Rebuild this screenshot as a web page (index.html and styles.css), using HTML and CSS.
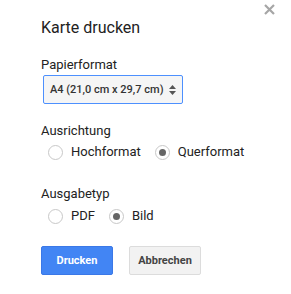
FILE: index.html
```html
<!DOCTYPE html>
<html lang="de">
<head>
    <meta charset="UTF-8">
    <title>Karte drucken</title>
    <link rel="stylesheet" href="styles.css">
</head>
<body>
    <div class="print-dialog">
        <svg class="close" width="11" height="11" viewBox="0 0 11 11">
            <path d="M1 1 L10 10 M10 1 L1 10" stroke="#a6a6a6" stroke-width="2.2"/>
        </svg>
        <div class="title">Karte drucken</div>

        <div class="section">
            <div class="label">Papierformat</div>
            <div class="select">
                <span>A4 (21,0 cm x 29,7 cm)</span>
                <svg class="arrows" width="7" height="10" viewBox="0 0 7 10">
                    <path d="M0 4 L3.5 0 L7 4 Z M0 6 L3.5 10 L7 6 Z" fill="#555"/>
                </svg>
            </div>
        </div>

        <div class="section orientation">
            <div class="label">Ausrichtung</div>
            <div class="radios">
                <span class="radio"></span><span class="radio-label">Hochformat</span>
                <span class="radio checked"></span><span class="radio-label">Querformat</span>
            </div>
        </div>

        <div class="section output">
            <div class="label">Ausgabetyp</div>
            <div class="radios">
                <span class="radio"></span><span class="radio-label">PDF</span>
                <span class="radio checked"></span><span class="radio-label">Bild</span>
            </div>
        </div>

        <div class="buttons">
            <button class="btn primary">Drucken</button>
            <button class="btn">Abbrechen</button>
        </div>
    </div>
</body>
</html>
```

FILE: styles.css
```css
* {
    margin: 0;
    padding: 0;
    box-sizing: border-box;
}
html, body {
    width: 100%;
    height: 100%;
    background-color: white;
    font-family: Roboto, Arial, sans-serif;
    color: #222;
}
.print-dialog {
    position: relative;
    padding: 16px 0 0 41px;
}
.close {
    position: absolute;
    top: 4px;
    right: 16px;
}
.title {
    font-size: 16px;
    line-height: 24px;
}
.section {
    margin-top: 17px;
}
.section.orientation {
    margin-top: 19px;
}
.section.output {
    margin-top: 26px;
}
.label {
    font-size: 13px;
    line-height: 16px;
}
.select {
    display: flex;
    align-items: center;
    justify-content: space-between;
    width: 140px;
    height: 29px;
    margin: 2px 0 0 2px;
    padding: 0 6px 0 6px;
    border: 1px solid #4d90fe;
    border-radius: 2px;
    background-color: #f5f5f5;
    font-size: 11px;
    font-weight: 500;
    white-space: nowrap;
    color: #333;
}
.radios {
    display: flex;
    align-items: center;
    margin-top: 5px;
    padding-left: 7px;
}
.output .radios {
    margin-top: 6px;
}
.radio {
    width: 15px;
    height: 15px;
    border: 1px solid #c8c8c8;
    border-radius: 50%;
    display: flex;
    align-items: center;
    justify-content: center;
}
.radio.checked::after {
    content: "";
    width: 7px;
    height: 7px;
    border-radius: 50%;
    background-color: #666;
}
.radio-label {
    font-size: 13px;
    line-height: 16px;
    margin: 0 14px 0 8px;
}
.buttons {
    display: flex;
    gap: 16px;
    margin-top: 22px;
}
.btn {
    height: 29px;
    width: 72px;
    border: 1px solid #dcdcdc;
    border-radius: 2px;
    background-color: #f2f2f2;
    font-family: Roboto, Arial, sans-serif;
    font-size: 11px;
    font-weight: bold;
    color: #444;
}
.btn.primary {
    background-color: #4285f4;
    border-color: #3b78e7;
    color: white;
}
```
